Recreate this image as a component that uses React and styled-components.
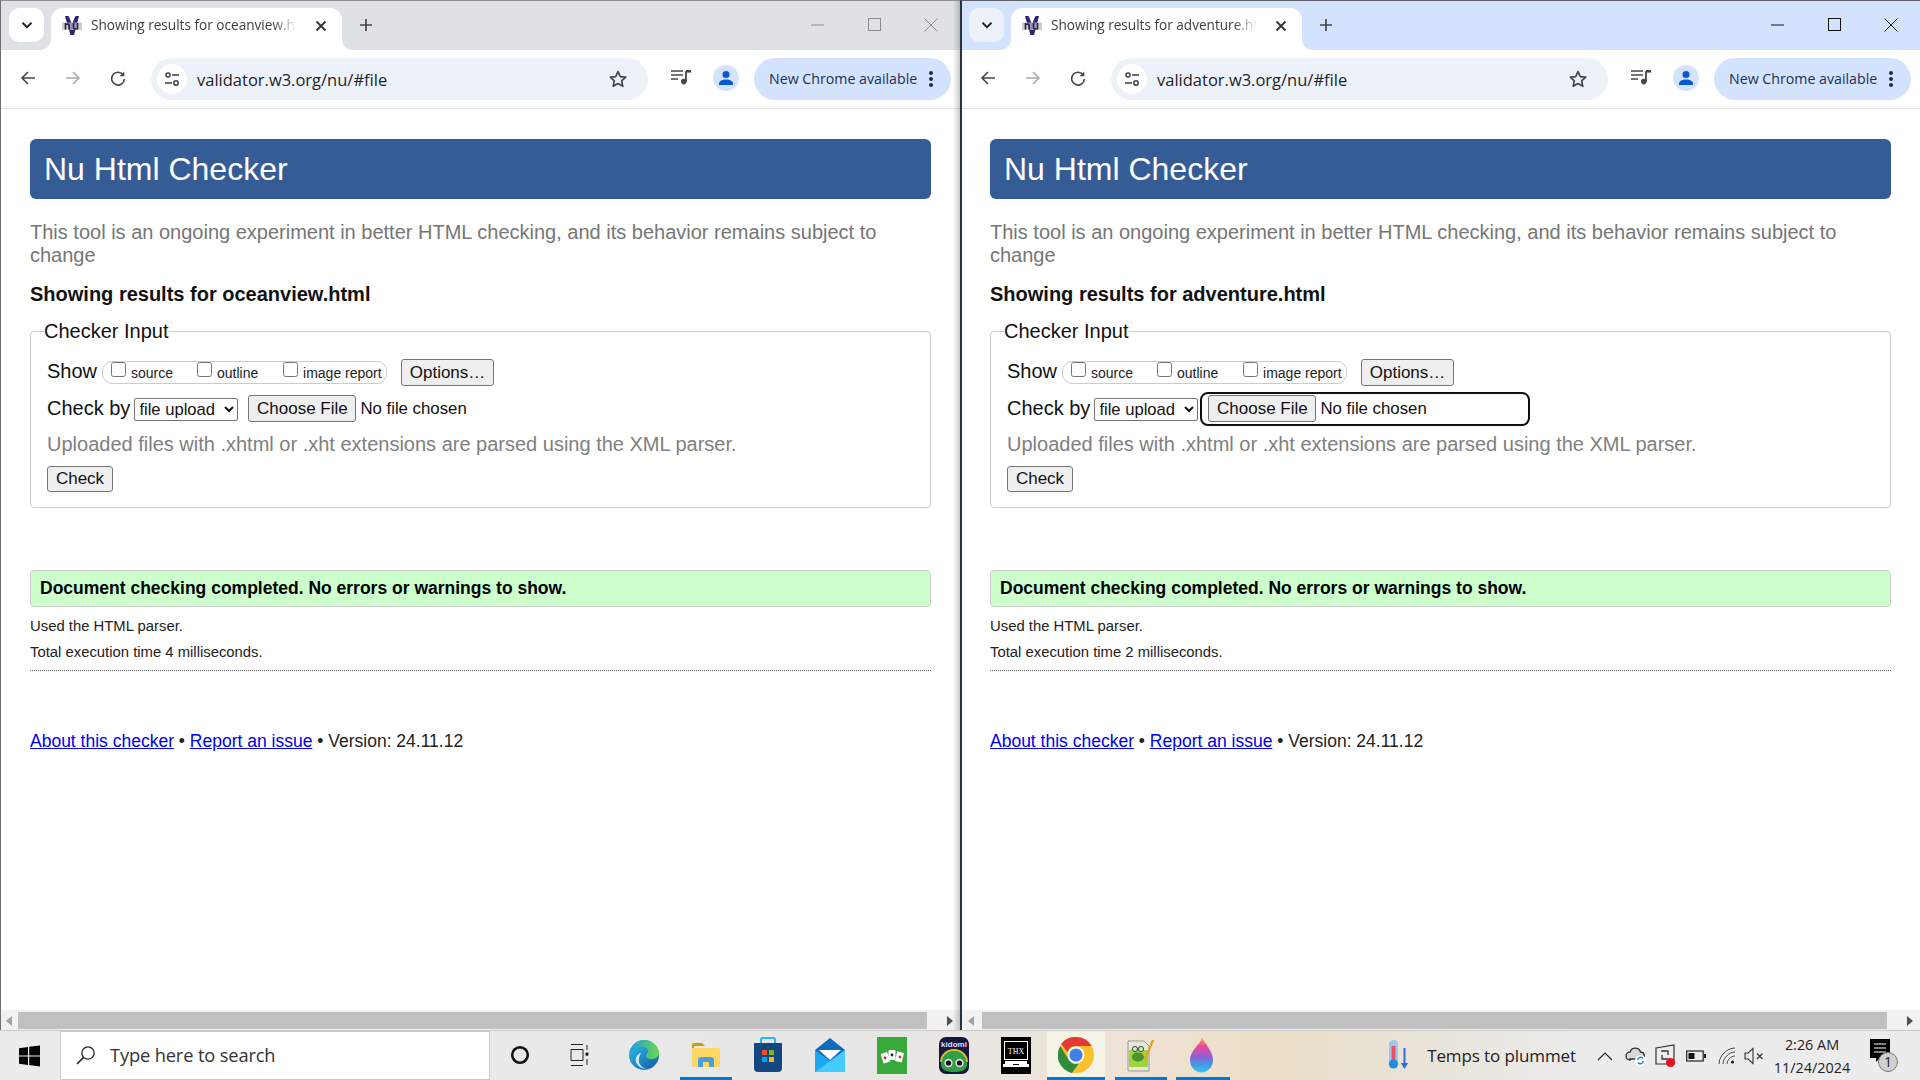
import React from 'react';
import styled, { createGlobalStyle } from 'styled-components';

const Global = createGlobalStyle`
  html, body { margin: 0; padding: 0; background: #fff; overflow: hidden; }
  * { box-sizing: border-box; }
`;

const UI = `"Open Sans", "Noto Sans", sans-serif`;
const PAGE = `"Liberation Sans", Arial, sans-serif`;

const Desktop = styled.div`
  width: 1920px; height: 1080px; display: flex; flex-direction: column; overflow: hidden;
`;
const Windows = styled.div`display: flex; height: 1030px;`;
const Win = styled.section`
  position: relative; width: 960px; height: 1030px; display: flex; flex-direction: column; background: #fff;
  &::after {
    content: ''; position: absolute; inset: 0; pointer-events: none; z-index: 5;
    border-top: 1px solid ${p => p.$active ? '#5f6368' : '#8b8d90'};
    border-left: ${p => p.$active ? '2px solid #27343d' : '1px solid #6e6e6e'};
  }
`;
const EdgeShade = styled.div`
  position: absolute; top: 0; right: 0; bottom: 0; width: 7px; z-index: 4; pointer-events: none;
  background: linear-gradient(90deg, rgba(90,90,90,0), rgba(90,90,90,.32));
`;
const TabStrip = styled.div`
  height: 50px; display: flex; align-items: flex-start; flex: none;
  background: ${p => p.$active ? '#d3e3fd' : '#dee1e6'};
  padding: 8px 0 0 9px;
`;
const TabMenu = styled.button`
  width: 35px; height: 34px; border: 0; border-radius: 10px; padding: 0; display: flex; align-items: center; justify-content: center;
  background: ${p => p.$active ? '#edf2fa' : '#fff'};
`;
const Tab = styled.div`
  position: relative; margin-left: 7px; width: 291px; height: 42px; background: #fff; border-radius: 12px 12px 0 0;
  display: flex; align-items: center; padding: 0 0 6px 11px;
  &::before, &::after {
    content: ''; position: absolute; bottom: 0; width: 10px; height: 10px;
    background: radial-gradient(circle at var(--cx) 0, transparent 9.5px, #fff 10px);
  }
  &::before { left: -10px; --cx: 0; }
  &::after { right: -10px; --cx: 100%; }
`;
const TabTitle = styled.span`
  width: 208px; margin: -3px 0 0 9px; font: 400 13.6px/20px ${UI}; color: #3c4043; white-space: nowrap; overflow: hidden;
  -webkit-mask-image: linear-gradient(90deg, #000 88%, transparent 99%);
  mask-image: linear-gradient(90deg, #000 88%, transparent 99%);
`;
const TabClose = styled.span`display: flex; margin-left: 15px;`;
const NewTab = styled.span`display: flex; margin: 9px 0 0 16px;`;
const WinButtons = styled.div`
  margin-left: auto; width: 127px; margin-right: 22px; margin-top: 10px; display: flex; justify-content: space-between; align-items: center;
  color: ${p => p.$active ? '#111' : '#8a8c90'};
`;
const Toolbar = styled.div`
  height: 59px; flex: none; display: flex; align-items: center; background: #fff;
  border-bottom: 1px solid #e0e0e0; padding: 0 9px 0 19px; border-radius: 10px 10px 0 0;
  position: relative;
`;
const NavButton = styled.span`
  width: 45px; display: flex; justify-content: flex-start; color: ${p => p.$off ? '#a9abae' : '#474747'}; margin-top: -3px;
`;
const Omnibox = styled.div`
  margin-left: -3px; width: 497px; height: 42px; border-radius: 21px; background: #edf2fa; display: flex; align-items: center; padding: 0 20px 0 6px; margin-top: -1px;
`;
const TuneBadge = styled.span`
  width: 30px; height: 30px; border-radius: 50%; background: #fff; display: flex; align-items: center; justify-content: center; flex: none;
`;
const Url = styled.span`margin: 1px 0 0 10px; font: 400 16.5px ${UI}; color: #1f1f1f; flex: 1;`;
const MediaSlot = styled.span`display: flex; margin-left: 23px; margin-top: -4px;`;
const Avatar = styled.span`
  width: 26px; height: 26px; margin-left: 22px; margin-top: -3px; border-radius: 50%; background: #d3e3fd; display: flex; align-items: center; justify-content: center;
`;
const UpdatePill = styled.div`
  margin-left: 15px; width: 197px; height: 42px; border-radius: 21px; background: #d3e3fd; display: flex; align-items: center; padding-left: 15px;
  font: 400 14.2px ${UI}; color: #1d2f55; white-space: nowrap; margin-top: -1px;
`;
const PillDots = styled.span`display: flex; margin-left: 7px;`;

const Page = styled.main`
  flex: 1; min-height: 0; padding: 30px 29px 0 30px; font-family: ${PAGE}; color: #111;
`;
const Title = styled.h1`
  margin: 0; height: 60px; background: #365c96; border-radius: 6px; display: flex; align-items: center;
  padding-left: 14px; color: #fff; font: 400 32px ${PAGE};
`;
const Intro = styled.p`
  margin: 22px 0 0; font-size: 20px; line-height: 23px; color: #767676;
`;
const Subject = styled.h2`margin: 15px 0 0; font: 700 20px/24px ${PAGE}; color: #111;`;
const InputSet = styled.fieldset`
  margin: 14px 0 0; padding: 0 16px; height: 188px; border: 1px solid #ccc; border-radius: 4px; min-width: 0;
`;
const SetLegend = styled.legend`
  padding: 0; margin-left: -3px; font-size: 20px; line-height: 23px; color: #111;
`;
const FormRow = styled.div`
  display: flex; align-items: center; font-size: 20px; height: ${p => p.$h}px; margin-top: ${p => p.$mt || 0}px;
`;
const RowLabel = styled.span`margin-top: -2px;`;
const ShowGroup = styled.div`
  margin-left: 5px; width: 285px; height: 23px; border: 1px solid #ccc; border-radius: 10px; display: flex; align-items: flex-start; padding-left: 8px;
`;
const CheckLabel = styled.label`
  display: flex; align-items: flex-start; width: ${p => p.$w}px; font-size: 14px; line-height: 16px; color: #222;
`;
const Check = styled.input.attrs({ type: 'checkbox' })`
  width: 15px; height: 15px; margin: 0 5px 0 0; flex: none;
`;
const CheckText = styled.span`margin-top: 3px;`;
const GreyButton = styled.button`
  font: 400 17px ${PAGE}; color: #111; background: #efefef; border: 1px solid #767676; border-radius: 3px; padding: 0;
  width: ${p => p.$w}px; height: ${p => p.$h}px; margin-left: ${p => p.$ml || 0}px;
`;
const ModeSelect = styled.select`
  margin-left: 4px; width: 104px; height: 23px; font: 400 16.6px ${PAGE}; color: #111; background: #fff; border: 1px solid #767676; border-radius: 2px; padding: 0;
`;
const FileInput = styled.input.attrs({ type: 'file' })`
  margin-left: 4px; width: 326px; height: 30px; padding: 1px 0 0 6px; font: 400 16.8px ${PAGE}; color: #111; border-radius: 6px;
  outline: ${p => p.$focused ? '2px solid #101010' : 'none'};
  &::file-selector-button {
    width: 108px; height: 27px; margin: 0 4px 0 0; padding: 0; font: 400 17px ${PAGE}; color: #111;
    background: #efefef; border: 1px solid #767676; border-radius: 3px;
  }
`;
const Hint = styled.div`margin-top: 9px; font-size: 20px; line-height: 23px; color: #808080; white-space: nowrap;`;
const Outcome = styled.div`
  margin-top: 62px; height: 37px; background: #ccffcc; border: 1px solid #ccc; border-radius: 4px; display: flex; align-items: center; padding-left: 9px;
  font: 700 17.5px ${PAGE}; color: #000;
`;
const Detail = styled.p`margin: ${p => p.$mt}px 0 0; font-size: 14.85px; line-height: 18px; color: #222;`;
const Rule = styled.hr`margin: 9px 0 0; border: 0; border-top: 1px dotted #666; height: 0;`;
const Footer = styled.p`margin: 60px 0 0; font-size: 17.5px; line-height: 21px; color: #222;`;
const Link = styled.a`color: #0000ee; text-decoration: underline;`;

const Scrollbar = styled.div`
  height: 20px; flex: none; background: #f1f1f1; display: flex; align-items: flex-end; position: relative;
`;
const ScrollEnd = styled.span`
  width: ${p => p.$w}px; height: 18px; flex: none; display: flex; align-items: center; justify-content: center; padding-left: ${p => p.$pl || 0}px;
`;
const Thumb = styled.span`flex: none; width: ${p => p.$w}px; height: 17px; margin-bottom: 1px; background: #c0c0c0;`;

const Taskbar = styled.footer`
  height: 50px; flex: none; display: flex; align-items: stretch; font-family: ${UI};
  background: linear-gradient(90deg, #ececec 0, #e7e7e7 45%, #efe4d8 58%, #eadfc6 66%, #e9e3d8 74%, #ececec 82%);
  border-top: 1px solid #c9c9c9;
`;
const StartSlot = styled.div`width: 60px; display: flex; align-items: center; justify-content: center;`;
const Search = styled.div`
  width: 430px; background: #fff; border: 1px solid #ccc; display: flex; align-items: center; padding: 0 0 2px 15px;
`;
const SearchText = styled.span`margin-left: 14px; font-size: 18.3px; color: #333; letter-spacing: -.15px;`;
const TaskSlot = styled.div`
  position: relative; flex: none; width: ${p => p.$w || 62}px; display: flex; align-items: center; justify-content: center;
  padding: 0 ${p => p.$pr || 0}px 1px ${p => p.$pl || 0}px;
  background: ${p => p.$current ? '#f5f2e6' : 'transparent'};
  ${p => p.$bar && `&::after { content: ''; position: absolute; left: ${p.$bar[0]}px; right: ${p.$bar[1]}px; bottom: 0; height: 3px; background: #0078d4; }`}
`;
const Tray = styled.div`margin-left: auto; display: flex; align-items: center; padding-right: 20px; color: #222;`;
const Weather = styled.span`margin-right: 17px; display: flex;`;
const WeatherText = styled.span`font-size: 17px; letter-spacing: -.1px; color: #222; margin-right: 14px; white-space: nowrap;`;
const TrayIcon = styled.span`display: flex; width: ${p => p.$w || 30}px; justify-content: center;`;
const Clock = styled.div`
  width: 84px; margin: 0 14px 0 4px; text-align: center; font-size: 14.4px; line-height: 23px; color: #222;
`;

/* icons */
const Svg = ({ s = 16, w, h, children, vb }) => (
  <svg width={w || s} height={h || s} viewBox={vb || `0 0 ${w || s} ${h || s}`} fill="none" aria-hidden="true">{children}</svg>
);
const Chevron = () => <Svg s={14}><path d="M2.5 4.8 7 9.2l4.5-4.4" stroke="#202124" strokeWidth="1.9" /></Svg>;
const NuLogo = () => (
  <Svg w={20} h={20}>
    <path d="M3 0h3.5L10 8l3.5-8H17l-5 19H8.5z" fill="#2a2470" />
    <path d="M0 6.5c-.4 2.5-.4 5 .4 7.5h19.2c.8-2.5.8-5 .4-7.5z" fill="#b9b9c4" opacity=".75" />
    <path d="M3.5 7v6.5M3.5 9c2-1.6 3.6-1 3.6.8v3.7M11.5 7v4.5c0 1.8 2.5 2 4 .6M15.5 7v6.5" stroke="#25233f" strokeWidth="1.6" />
  </Svg>
);
const CloseX = () => <Svg s={14}><path d="M2.5 2.5l9 9m0-9l-9 9" stroke="#303134" strokeWidth="1.8" /></Svg>;
const PlusIcon = () => <Svg s={16}><path d="M8 2v12M2 8h12" stroke="#45474a" strokeWidth="1.7" /></Svg>;
const MinIcon = () => <Svg w={14} h={14}><path d="M0 7h13" stroke="currentColor" /></Svg>;
const MaxIcon = () => <Svg s={14}><rect x=".5" y=".5" width="12" height="12" stroke="currentColor" /></Svg>;
const XWin = () => <Svg s={14}><path d="M.5.5l13 13m0-13l-13 13" stroke="currentColor" /></Svg>;
const Back = () => <Svg s={18}><path d="M16 9H3M9 3 3 9l6 6" stroke="currentColor" strokeWidth="1.6" /></Svg>;
const Forward = () => <Svg s={18}><path d="M2 9h13M9 3l6 6-6 6" stroke="currentColor" strokeWidth="1.6" /></Svg>;
const Reload = () => <Svg s={18}><path d="M14.4 6.2A6.4 6.4 0 1 0 15.4 10" stroke="currentColor" strokeWidth="1.6" /><path d="M15.3 2.4v4.8h-4.8z" fill="currentColor" /></Svg>;
const Tune = () => <Svg s={18}><circle cx="5" cy="5" r="2" stroke="#3b3d40" strokeWidth="1.5" /><path d="M9 5h7M2 13h7" stroke="#3b3d40" strokeWidth="1.7" /><circle cx="13" cy="13" r="2.2" stroke="#3b3d40" strokeWidth="1.5" /></Svg>;
const StarIcon = () => <Svg s={20}><path d="M10 2.6l2.3 5 5.4.6-4 3.7 1.1 5.4L10 14.6l-4.8 2.7 1.1-5.4-4-3.7 5.4-.6z" stroke="#474747" strokeWidth="1.7" strokeLinejoin="round" /></Svg>;
const MediaIcon = () => <Svg w={20} h={16}><path d="M0 2h12M0 6h12M0 10h7" stroke="#474747" strokeWidth="1.7" /><path d="M15 2v10.5" stroke="#474747" strokeWidth="1.8" /><path d="M15 1h5v2.6h-5z" fill="#474747" /><circle cx="12.8" cy="12.6" r="2.8" fill="#474747" /></Svg>;
const Person = () => <Svg s={18}><circle cx="9" cy="5.4" r="3.5" fill="#0b57d0" /><path d="M2 16v-1.6c0-2.6 3.8-4 7-4s7 1.4 7 4V16z" fill="#0b57d0" /></Svg>;
const Dots = () => <Svg w={14} h={20}><g fill="#1f2f52"><circle cx="7" cy="4" r="2" /><circle cx="7" cy="10" r="2" /><circle cx="7" cy="16" r="2" /></g></Svg>;
const ArrowL = ({ c }) => <Svg w={6} h={10}><path d="M6 0v10L0 5z" fill={c} /></Svg>;
const ArrowR = ({ c }) => <Svg w={6} h={10}><path d="M0 0v10l6-5z" fill={c} /></Svg>;

const WinLogo = () => <Svg s={22}><path d="M0 3.2 9 2v8.4H0zM10.2 1.8 21 .4v10H10.2zM0 11.6h9V20l-9-1.2zM10.2 11.6H21v10l-10.8-1.5z" fill="#050505" /></Svg>;
const Magnifier = () => <Svg s={20}><circle cx="12" cy="8" r="6.2" stroke="#222" strokeWidth="1.3" /><path d="M7.6 12.4 1 19" stroke="#222" strokeWidth="1.5" /></Svg>;
const Cortana = () => <Svg s={20}><circle cx="10" cy="10" r="7.8" stroke="#111" strokeWidth="2.6" /></Svg>;
const TaskView = () => <Svg w={20} h={24}><path d="M2 1.5h12M2 22.5h12M2 6.5h12v11H2z" stroke="#222" /><path d="M18 2v5M18 16v6" stroke="#222" /><rect x="16.6" y="9.6" width="2.8" height="3" fill="#111" /></Svg>;
const Edge = () => (
  <Svg s={32}>
    <defs>
      <linearGradient id="edgeA" x1="0" y1="0" x2="1" y2="1"><stop offset="0" stopColor="#35c1f1" /><stop offset="1" stopColor="#0c59a4" /></linearGradient>
      <linearGradient id="edgeB" x1="0" y1="0" x2="1" y2="0"><stop offset="0" stopColor="#1b9de2" /><stop offset="1" stopColor="#6fd948" /></linearGradient>
    </defs>
    <circle cx="16" cy="16" r="15" fill="url(#edgeA)" />
    <path d="M2 13C4 4 12 1 16 1c8 0 15 6 15 13 0 4-4 6-8 6-3 0-5-1-5-3 0-3 3-3 2-6-1-2-4-3-7-3-5 0-9 3-11 5z" fill="url(#edgeB)" />
    <path d="M13 14c-4 1-6 5-5 9 1 3 5 7 10 7-5-2-8-6-7-10 0-2 1-4 2-6z" fill="#fff" opacity=".8" />
  </Svg>
);
const Folder = () => (
  <Svg w={28} h={28}>
    <path d="M0 4a2 2 0 0 1 2-2h8l3 3H2v4H0z" fill="#d19a0f" />
    <path d="M0 7h26a2 2 0 0 1 2 2v15a2 2 0 0 1-2 2H2a2 2 0 0 1-2-2z" fill="#ffd766" />
    <path d="M6 26v-7a3 3 0 0 1 3-3h10a3 3 0 0 1 3 3v7h-5v-5h-6v5z" fill="#4d9fdc" />
  </Svg>
);
const Store = () => (
  <Svg w={30} h={36}>
    <path d="M8 7V3a2 2 0 0 1 2-2h10a2 2 0 0 1 2 2v4" stroke="#27b8e8" strokeWidth="2" />
    <path d="M1 6h28v25a4 4 0 0 1-4 4H5a4 4 0 0 1-4-4z" fill="#12487f" />
    <rect x="9" y="13" width="5" height="5" fill="#f25022" /><rect x="16" y="13" width="5" height="5" fill="#7fba00" />
    <rect x="9" y="20" width="5" height="5" fill="#00a4ef" /><rect x="16" y="20" width="5" height="5" fill="#ffb900" />
  </Svg>
);
const Mail = () => (
  <Svg w={30} h={34}>
    <path d="M0 12 15 0l15 12v22H0z" fill="#0f6cbd" />
    <path d="M4 12h22L15 22z" fill="#fff" />
    <path d="M0 12v22h30z" fill="#1ea7ec" />
    <path d="M30 12v22H0z" fill="#45ccff" />
  </Svg>
);
const Solitaire = () => (
  <Svg w={30} h={37}>
    <rect width="30" height="37" fill="#3aa93c" />
    <rect x="5" y="16" width="7" height="10" rx="1" fill="#fff" transform="rotate(-18 8 21)" />
    <rect x="11.5" y="13" width="7" height="10" rx="1" fill="#fff" />
    <rect x="19" y="15" width="7" height="10" rx="1" fill="#fff" transform="rotate(14 23 20)" />
    <circle cx="8" cy="21" r="1.4" fill="#c33" /><circle cx="15" cy="18" r="1.4" fill="#223" /><circle cx="23" cy="20" r="1.4" fill="#c33" />
  </Svg>
);
const Kidomi = () => (
  <Svg w={30} h={37}>
    <rect width="30" height="37" rx="7" fill="#15183f" />
    <text x="15" y="10" textAnchor="middle" fontSize="8" fontWeight="700" fontFamily="Liberation Sans" fill="#e6dcff">kidomi</text>
    <path d="M2 27c0-9 6-13 13-13s13 4 13 13c0 6-5 8-13 8S2 33 2 27z" fill="#2f9e44" />
    <path d="M2 25a13 12 0 0 1 26 0" stroke="#d9c52e" strokeWidth="1.8" />
    <circle cx="9.5" cy="26" r="4.2" fill="#ddd" /><circle cx="20.5" cy="26" r="4.2" fill="#ddd" />
    <circle cx="9.5" cy="26" r="2.6" fill="#111" /><circle cx="20.5" cy="26" r="2.6" fill="#111" />
  </Svg>
);
const Laptop = () => (
  <Svg w={30} h={37}>
    <rect width="30" height="37" fill="#000" />
    <rect x="3.5" y="4.5" width="23" height="18" stroke="#fff" />
    <text x="15" y="17" textAnchor="middle" fontSize="8" fontFamily="Liberation Serif" fill="#fff">THX</text>
    <path d="M4 24h22v3h2v3H2v-3h2z" fill="#fff" /><rect x="12" y="27" width="6" height="1" fill="#000" />
  </Svg>
);
const ChromeLogo = () => (
  <Svg s={36}>
    <circle cx="18" cy="18" r="18" fill="#fbc02d" />
    <path d="M18 0a18 18 0 0 1 15.6 9H18a9 9 0 0 0-8.6 6.3L3.2 6.8A18 18 0 0 1 18 0z" fill="#e53935" />
    <path d="M2.4 9 11 23.5a9 9 0 0 0 9.6 3.2L14 36A18 18 0 0 1 2.4 9z" fill="#2e8b3d" />
    <circle cx="18" cy="18" r="8.4" fill="#fff" /><circle cx="18" cy="18" r="6.6" fill="#3f7fe8" />
  </Svg>
);
const NotepadPP = () => (
  <Svg w={30} h={34}>
    <path d="M3 3h16l5 5v25H3z" fill="#e6e8dc" stroke="#9a9a8e" />
    <rect x="4" y="12" width="19" height="17" fill="#9ed63a" />
    <ellipse cx="13" cy="19" rx="6" ry="4.5" fill="#4d9430" />
    <circle cx="10" cy="11" r="2.6" fill="#d8e8c8" stroke="#444" /><circle cx="16" cy="11" r="2.6" fill="#d8e8c8" stroke="#444" />
    <path d="M20 22 28 2" stroke="#e0a52a" strokeWidth="2.4" />
  </Svg>
);
const Drop = () => (
  <Svg w={24} h={36}>
    <defs>
      <linearGradient id="dropA" x1="0" y1="0" x2="0" y2="1"><stop offset="0" stopColor="#ffc93c" /><stop offset=".25" stopColor="#f0479a" /><stop offset=".55" stopColor="#8f5fd0" /><stop offset=".8" stopColor="#3c9de8" /><stop offset="1" stopColor="#35c6f0" /></linearGradient>
    </defs>
    <path d="M12 0c1 5 11 13 11 23a11.5 12.5 0 0 1-23 0C0 13 11 7 12 0z" fill="url(#dropA)" />
  </Svg>
);
const Thermo = () => (
  <Svg w={24} h={34}>
    <rect x="3" y="1" width="9" height="28" rx="4.5" fill="#9cc8ee" />
    <rect x="5.6" y="7" width="3.8" height="14" fill="#ec5068" />
    <circle cx="7.5" cy="25" r="4.6" fill="#1d8fe0" />
    <path d="M18.5 9v18" stroke="#2f6fd6" strokeWidth="2" /><path d="M14.8 24h7.4l-3.7 6z" fill="#2f6fd6" />
  </Svg>
);
const Caret = () => <Svg w={16} h={10}><path d="M1 9l7-7 7 7" stroke="#222" strokeWidth="1.2" /></Svg>;
const CloudSync = () => <Svg s={22}><path d="M5 15a4 4 0 0 1 0-8 5.5 5.5 0 0 1 10.5 0A4 4 0 0 1 18 14H5z" fill="#d8d8d8" stroke="#333" strokeWidth="1.4" /><circle cx="15.5" cy="15.5" r="5.6" fill="#fff" /><path d="M12.6 15a3 3 0 0 1 5.4-1.5M18.4 16a3 3 0 0 1-5.4 1.5" stroke="#1a7fd4" strokeWidth="1.4" /></Svg>;
const Defender = () => <Svg w={22} h={24}><path d="M1 4 19 1v19H1z" stroke="#333" strokeWidth="1.2" /><path d="M6 7h7v4M13 15H7v-4" stroke="#333" strokeWidth="1.3" /><circle cx="15.5" cy="18.5" r="4.5" fill="#e81123" /></Svg>;
const Battery = () => <Svg w={20} h={12}><rect x=".7" y="1" width="16.5" height="10" stroke="#222" strokeWidth="1.2" /><rect x="2.5" y="3" width="6" height="6" fill="#111" /><rect x="18" y="4" width="2" height="4" fill="#222" /></Svg>;
const Wifi = () => <Svg s={18}><path d="M1 17C1 9 9 1 17 1M5 17c0-6 6-12 12-12M9 17c0-4 4-8 8-8" stroke="#444" strokeWidth="1" /><circle cx="14.5" cy="15" r="1.6" fill="#222" /></Svg>;
const Mute = () => <Svg w={20} h={18}><path d="M1 6h3l5-4.5v15L4 12H1z" stroke="#333" strokeWidth="1.1" /><path d="M13 6.5l5.5 5.5m0-5.5L13 12" stroke="#333" strokeWidth="1.2" /></Svg>;
const Notify = () => (
  <Svg w={32} h={36}>
    <path d="M2 1h20v19H12l-4 4v-4H2z" fill="#000" />
    <path d="M6 6h12M6 10h12M6 14h12" stroke="#fff" strokeWidth="1.2" />
    <circle cx="20" cy="24" r="9.5" fill="#d0d0d0" stroke="#777" />
    <text x="20" y="29" textAnchor="middle" fontSize="14" fontFamily="Open Sans" fill="#222">1</text>
  </Svg>
);

const Window = ({ active, title, file, ms, lead, thumb, rightW }) => (
  <Win $active={active}>
    {!active && <EdgeShade />}
    <TabStrip $active={active}>
      <TabMenu $active={active}><Chevron /></TabMenu>
      <Tab>
        <NuLogo />
        <TabTitle>{title}</TabTitle>
        <TabClose><CloseX /></TabClose>
      </Tab>
      <NewTab><PlusIcon /></NewTab>
      <WinButtons $active={active}><MinIcon /><MaxIcon /><XWin /></WinButtons>
    </TabStrip>
    <Toolbar>
      <NavButton><Back /></NavButton>
      <NavButton $off><Forward /></NavButton>
      <NavButton><Reload /></NavButton>
      <Omnibox>
        <TuneBadge><Tune /></TuneBadge>
        <Url>validator.w3.org/nu/#file</Url>
        <StarIcon />
      </Omnibox>
      <MediaSlot><MediaIcon /></MediaSlot>
      <Avatar><Person /></Avatar>
      <UpdatePill>New Chrome available<PillDots><Dots /></PillDots></UpdatePill>
    </Toolbar>
    <Page>
      <Title>Nu Html Checker</Title>
      <Intro>This tool is an ongoing experiment in better HTML checking, and its behavior remains subject to change</Intro>
      <Subject>Showing results for {file}</Subject>
      <InputSet>
        <SetLegend>Checker Input</SetLegend>
        <FormRow $h={27} $mt={16}>
          <RowLabel>Show</RowLabel>
          <ShowGroup>
            <CheckLabel $w={86}><Check /><CheckText>source</CheckText></CheckLabel>
            <CheckLabel $w={86}><Check /><CheckText>outline</CheckText></CheckLabel>
            <CheckLabel $w={100}><Check /><CheckText>image report</CheckText></CheckLabel>
          </ShowGroup>
          <GreyButton $w={93} $h={27} $ml={14}>Options…</GreyButton>
        </FormRow>
        <FormRow $h={30} $mt={8}>
          <RowLabel>Check by</RowLabel>
          <ModeSelect defaultValue="file"><option value="file">file upload</option></ModeSelect>
          <FileInput $focused={active} />
        </FormRow>
        <Hint>Uploaded files with .xhtml or .xht extensions are parsed using the XML parser.</Hint>
        <FormRow $h={26} $mt={10}>
          <GreyButton $w={66} $h={26}>Check</GreyButton>
        </FormRow>
      </InputSet>
      <Outcome>Document checking completed. No errors or warnings to show.</Outcome>
      <Detail $mt={10}>Used the HTML parser.</Detail>
      <Detail $mt={8}>Total execution time {ms} milliseconds.</Detail>
      <Rule />
      <Footer><Link>About this checker</Link> • <Link>Report an issue</Link> • Version: 24.11.12</Footer>
    </Page>
    <Scrollbar>
      <ScrollEnd $w={lead}><ArrowL c={'#a0a0a0'} /></ScrollEnd>
      <Thumb $w={thumb} />
      <ScrollEnd $w={rightW} $pl={12}><ArrowR c="#505050" /></ScrollEnd>
    </Scrollbar>
  </Win>
);

export default function App() {
  return (
    <Desktop>
      <Global />
      <Windows>
        <Window title="Showing results for oceanview.html" file="oceanview.html" ms={4} lead={18} thumb={909} rightW={33} />
        <Window active title="Showing results for adventure.html" file="adventure.html" ms={2} lead={22} thumb={905} rightW={33} />
      </Windows>
      <Taskbar>
        <StartSlot><WinLogo /></StartSlot>
        <Search><Magnifier /><SearchText>Type here to search</SearchText></Search>
        <TaskSlot $w={59}><Cortana /></TaskSlot>
        <TaskSlot $w={64} $pr={4}><TaskView /></TaskSlot>
        <TaskSlot><Edge /></TaskSlot>
        <TaskSlot $bar={[5, 5]}><Folder /></TaskSlot>
        <TaskSlot><Store /></TaskSlot>
        <TaskSlot><Mail /></TaskSlot>
        <TaskSlot><Solitaire /></TaskSlot>
        <TaskSlot><Kidomi /></TaskSlot>
        <TaskSlot><Laptop /></TaskSlot>
        <TaskSlot $w={58} $current $bar={[0, 0]}><ChromeLogo /></TaskSlot>
        <TaskSlot $w={66} $pl={4} $bar={[10, 4]}><NotepadPP /></TaskSlot>
        <TaskSlot $bar={[5, 3]}><Drop /></TaskSlot>
        <Tray>
          <Weather><Thermo /></Weather>
          <WeatherText>Temps to plummet</WeatherText>
          <TrayIcon><Caret /></TrayIcon>
          <TrayIcon $w={32}><CloudSync /></TrayIcon>
          <TrayIcon $w={28}><Defender /></TrayIcon>
          <TrayIcon $w={32}><Battery /></TrayIcon>
          <TrayIcon><Wifi /></TrayIcon>
          <TrayIcon $w={24}><Mute /></TrayIcon>
          <Clock>2:26 AM<br />11/24/2024</Clock>
          <Notify />
        </Tray>
      </Taskbar>
    </Desktop>
  );
}
